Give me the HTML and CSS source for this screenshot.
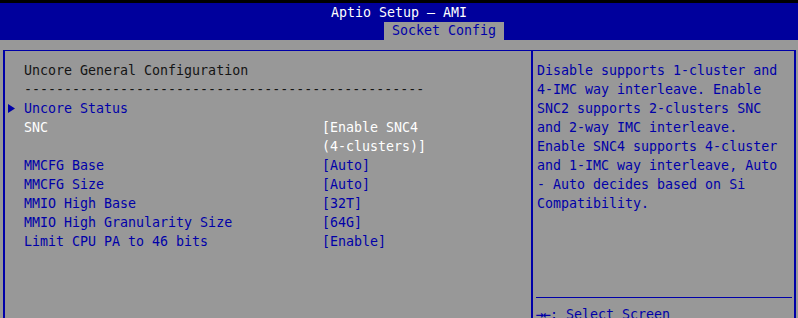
FILE: index.html
```html
<!DOCTYPE html>
<html>
<head>
<meta charset="utf-8">
<link rel="stylesheet" href="styles.css">
</head>
<body>
<div class="screen">
  <div class="topstrip"></div>
  <header class="header">
    <div class="title">Aptio Setup – AMI</div>
    <div class="tabs"><span class="tab">Socket Config</span></div>
  </header>
  <main class="frame">
    <section class="left">
      <div class="row"><span class="mark"></span><span class="heading">Uncore General Configuration</span></div>
      <div class="row"><span class="mark"></span><span class="heading">--------------------------------------------------</span></div>
      <div class="row link"><span class="mark"><svg class="arrow" width="7" height="9" viewBox="0 0 7 9"><path d="M0 0 L7 4.5 L0 9 Z" fill="#0000a8"/></svg></span><span class="label">Uncore Status</span></div>
      <div class="row sel"><span class="mark"></span><span class="label">SNC</span><span class="value">[Enable SNC4<br>(4-clusters)]</span></div>
      <div class="row"><span class="mark"></span><span class="label">MMCFG Base</span><span class="value">[Auto]</span></div>
      <div class="row"><span class="mark"></span><span class="label">MMCFG Size</span><span class="value">[Auto]</span></div>
      <div class="row"><span class="mark"></span><span class="label">MMIO High Base</span><span class="value">[32T]</span></div>
      <div class="row"><span class="mark"></span><span class="label">MMIO High Granularity Size</span><span class="value">[64G]</span></div>
      <div class="row"><span class="mark"></span><span class="label">Limit CPU PA to 46 bits</span><span class="value">[Enable]</span></div>
    </section>
    <aside class="right">
      <div class="help">Disable supports 1-cluster and<br>4-IMC way interleave. Enable<br>SNC2 supports 2-clusters SNC<br>and 2-way IMC interleave.<br>Enable SNC4 supports 4-cluster<br>and 1-IMC way interleave, Auto<br>- Auto decides based on Si<br>Compatibility.</div>
      <div class="keys">
        <div><span class="keyglyph">→←</span>: Select Screen</div>
      </div>
    </aside>
  </main>
</div>
</body>
</html>
```

FILE: styles.css
```css
html, body {
  margin: 0;
  padding: 0;
  overflow: hidden;
  background: #989898;
}
.screen {
  width: 798px;
  height: 318px;
  overflow: hidden;
  background: #989898;
  font-family: "DejaVu Sans Mono", "Liberation Mono", monospace;
  font-size: 13.3px;
  line-height: 19px;
  color: #0000a8;
}
.topstrip {
  height: 3px;
  background: #000000;
}
.header {
  height: 37px;
  background: #00009c;
  display: flex;
  flex-direction: column;
}
.title {
  height: 19px;
  line-height: 20px;
  text-align: center;
  color: #ffffff;
}
.tabs {
  display: flex;
  padding-left: 384px;
}
.tab {
  background: #989898;
  color: #0000a8;
  padding: 0 8px;
  height: 18px;
  line-height: 18px;
}
.frame {
  margin: 10px 2px 0 3px;
  border-top: 1px solid #0000a8;
  border-left: 2px solid #0000a8;
  border-right: 2px solid #0000a8;
  display: flex;
  height: 400px;
}
.left {
  width: 526px;
  padding-top: 10px;
  border-right: 2px solid #0000a8;
}
.row {
  display: flex;
  padding-left: 3px;
}
.mark {
  width: 16px;
  flex: none;
  display: flex;
  align-items: center;
  height: 19px;
}
.arrow {
  display: block;
}
.heading {
  color: #141414;
}
.label {
  width: 298px;
  flex: none;
  color: #0000a8;
}
.value {
  color: #0000a8;
}
.sel .label, .sel .value {
  color: #ffffff;
}
.right {
  flex: 1;
  display: flex;
  flex-direction: column;
}
.help {
  height: 236px;
  padding: 10px 0 0 1px;
  color: #0000a8;
  border-bottom: 1px solid #0000a8;
  margin: 0 2px 0 3px;
}
.keys {
  padding: 7px 0 0 3px;
  color: #0000a8;
}
.keyglyph {
  font-weight: bold;
  letter-spacing: -1px;
}
```
